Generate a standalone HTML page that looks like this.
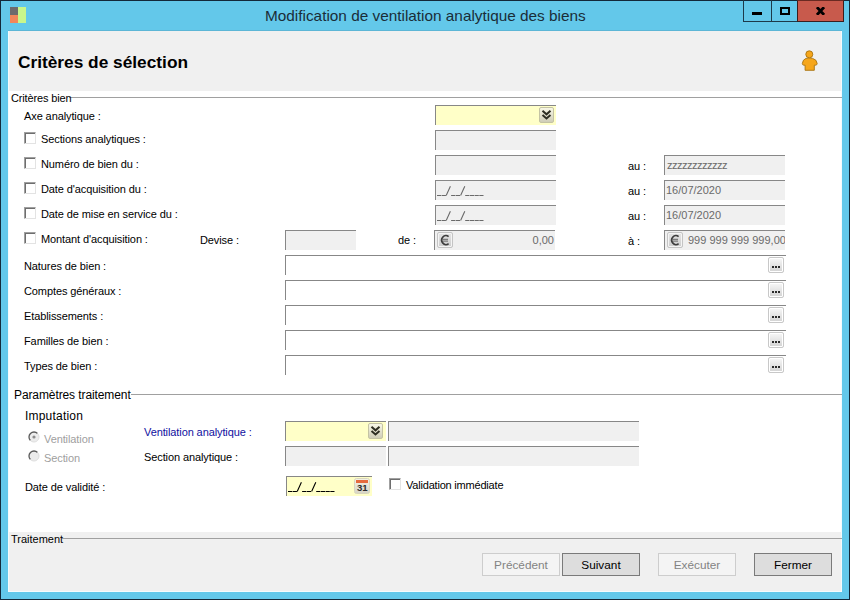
<!DOCTYPE html>
<html><head><meta charset="utf-8">
<style>
*{margin:0;padding:0;box-sizing:border-box}
html,body{width:850px;height:600px;overflow:hidden;background:#13293a;font-family:"Liberation Sans",sans-serif;font-size:11px;color:#000;position:relative}
.a{position:absolute}
#win{position:absolute;left:1px;top:1px;width:848px;height:598px;background:#63c8ea}
#client{position:absolute;left:8px;top:31px;width:834px;height:561px;background:#fff;border-left:1px solid #f4fbfd;border-bottom:1px solid #f4fbfd;border-right:1px solid #f4fbfd}
.t{position:absolute;white-space:nowrap;line-height:13px;letter-spacing:-0.1px}
.fld{position:absolute;background:#f0f0f0;border-top:1px solid #878787;border-left:1px solid #878787;height:20px;overflow:hidden}
.yel{background:#ffffc8}
.ft{position:absolute;white-space:nowrap;color:#6a6a6a;font-size:11px;line-height:13px;top:3px;left:1px}
.cb{position:absolute;width:12px;height:12px;border-top:1px solid #a0a0a0;border-left:1px solid #a0a0a0;border-right:1px solid #e3e3e3;border-bottom:1px solid #e3e3e3;box-shadow:inset 1px 1px #6e6e6e;background:#fff}
.ell{position:absolute;width:16px;height:16px;border:1px solid #c8c8c8;border-radius:2px;box-shadow:inset 0 0 0 1px #fff;background:linear-gradient(#f8f8f8,#d2d2d2)}
.ell:after{content:"";position:absolute;left:3px;top:8px;width:2px;height:2px;background:#2a2a2a;box-shadow:3px 0 #2a2a2a,6px 0 #2a2a2a}
.cbtn{position:absolute;width:15px;height:16px;border:1px solid #c4c3a4;border-radius:2px;background:linear-gradient(#f8f7e6,#cfcdb7)}
.eur{position:absolute;width:16px;height:16px;border:1px solid #c4c4c4;border-radius:2px;box-shadow:inset 0 0 0 1px #f4f4f4;background:linear-gradient(#e4e4e4,#cdcdcd)}
.btn{position:absolute;height:23px;width:78px;border:1px solid #7a7a7a;background:#dddddd;text-align:center;line-height:22px;font-size:11.8px;color:#000}
.dis{border-color:#cdcdcd;background:#f4f4f4;color:#838383}
.hl{position:absolute;height:1px;background:#a0a0a0}
</style></head><body>
<div id="win"></div>
<!-- title icon -->
<div class="a" style="left:10px;top:7px;width:8px;height:8px;background:#6e6a6c"></div>
<div class="a" style="left:10px;top:15px;width:8px;height:8px;background:#f2865a"></div>
<div class="a" style="left:18px;top:7px;width:8px;height:16px;background:#c9f68b"></div>
<div class="t" style="left:265px;top:7px;font-size:15.35px;line-height:18px;color:#1a2d38;letter-spacing:0">Modification de ventilation analytique des biens</div>
<!-- title buttons -->
<div class="a" style="left:743px;top:0;width:29px;height:22px;border:1px solid #1d3a4a;border-top:none"></div>
<div class="a" style="left:752px;top:12px;width:10px;height:3px;background:#000"></div>
<div class="a" style="left:771px;top:0;width:27px;height:22px;border:1px solid #1d3a4a;border-top:none;border-left:none"></div>
<div class="a" style="left:780px;top:7px;width:10px;height:8px;border:2px solid #000"></div>
<div class="a" style="left:797px;top:0;width:47px;height:22px;background:#c85a4c;border:1px solid #3a1e1e;border-top:1px solid #6a2a22"></div>
<svg class="a" style="left:816px;top:7px" width="9" height="8" viewBox="0 0 9 8"><path d="M0.9 0.2 L8.1 7.8 M8.1 0.2 L0.9 7.8" stroke="#000" stroke-width="2.9"/></svg>

<div class="a" style="left:8px;top:30px;width:834px;height:1px;background:#5cb6d6"></div>
<div id="client"></div>
<!-- header -->
<div class="a" style="left:9px;top:31px;width:832px;height:60px;background:#f0f0f0"></div>
<div class="t" style="left:18px;top:52px;font-size:17.3px;line-height:20px;font-weight:bold;letter-spacing:0">Critères de sélection</div>
<!-- person icon -->
<svg class="a" style="left:800px;top:48px" width="20" height="26" viewBox="0 0 20 26">
  <path d="M6 10.4 Q9.3 9.4 12.6 10.4 Q16.8 11.4 17.2 15.6 Q17.2 17 15.6 17.2 L14.3 17.2 L14.3 22.3 L5.1 22.3 L5.1 17.2 L3.8 17.2 Q2.3 17 2.3 15.6 Q2.8 11.4 6 10.4 Z" fill="#f6a61a" stroke="#a8730e" stroke-width="0.9"/>
  <circle cx="9.3" cy="6.3" r="3.5" fill="#f6a61a" stroke="#a8730e" stroke-width="0.9"/>
</svg>

<!-- group 1 -->
<div class="hl" style="left:69px;top:97px;width:773px"></div>
<div class="t" style="left:11px;top:92px;letter-spacing:-0.15px">Critères bien</div>

<div class="t" style="left:24px;top:110px">Axe analytique :</div>
<div class="fld yel" style="left:435px;top:105px;width:121px"></div>
<div class="cbtn" style="left:539px;top:107px"><svg width="13" height="14" viewBox="0 0 13 14" style="position:absolute;left:0;top:0"><path d="M2.5 2.8 L6.5 6.3 L10.5 2.8 M2.5 7 L6.5 10.5 L10.5 7" fill="none" stroke="#2e2e22" stroke-width="2"/></svg></div>

<div class="cb" style="left:24px;top:132px"></div>
<div class="t" style="left:41px;top:133px">Sections analytiques :</div>
<div class="fld" style="left:435px;top:130px;width:121px"></div>

<div class="cb" style="left:24px;top:157px"></div>
<div class="t" style="left:41px;top:158px">Numéro de bien du :</div>
<div class="fld" style="left:435px;top:155px;width:121px"></div>
<div class="t" style="left:628px;top:160px">au :</div>
<div class="fld" style="left:664px;top:155px;width:121px"><div class="ft" style="letter-spacing:-0.5px;left:2px">zzzzzzzzzzzz</div></div>

<div class="cb" style="left:24px;top:182px"></div>
<div class="t" style="left:41px;top:183px">Date d'acquisition du :</div>
<div class="fld" style="left:435px;top:180px;width:121px"><svg width="48" height="12" viewBox="0 0 48 12" style="position:absolute;left:1px;top:4px"><path d="M0.0 10.5 H4.2 M4.7 10.5 H8.9 M14.1 10.5 H18.3 M18.8 10.5 H23.0 M28.2 10.5 H32.4 M32.9 10.5 H37.1 M37.6 10.5 H41.8 M42.3 10.5 H46.5 M9.2 10.5 L13.4 1.2 M23.6 10.5 L27.8 1.2" fill="none" stroke="#6a6a6a" stroke-width="1.1"/></svg></div>
<div class="t" style="left:628px;top:185px">au :</div>
<div class="fld" style="left:664px;top:180px;width:121px"><div class="ft">16/07/2020</div></div>

<div class="cb" style="left:24px;top:207px"></div>
<div class="t" style="left:41px;top:208px">Date de mise en service du :</div>
<div class="fld" style="left:435px;top:205px;width:121px"><svg width="48" height="12" viewBox="0 0 48 12" style="position:absolute;left:1px;top:4px"><path d="M0.0 10.5 H4.2 M4.7 10.5 H8.9 M14.1 10.5 H18.3 M18.8 10.5 H23.0 M28.2 10.5 H32.4 M32.9 10.5 H37.1 M37.6 10.5 H41.8 M42.3 10.5 H46.5 M9.2 10.5 L13.4 1.2 M23.6 10.5 L27.8 1.2" fill="none" stroke="#6a6a6a" stroke-width="1.1"/></svg></div>
<div class="t" style="left:628px;top:210px">au :</div>
<div class="fld" style="left:664px;top:205px;width:121px"><div class="ft">16/07/2020</div></div>

<div class="cb" style="left:24px;top:232px"></div>
<div class="t" style="left:41px;top:233px">Montant d'acquisition :</div>
<div class="t" style="left:200px;top:234px">Devise :</div>
<div class="fld" style="left:285px;top:230px;width:71px"></div>
<div class="t" style="left:398px;top:234px">de :</div>
<div class="fld" style="left:434px;top:230px;width:121px"><div class="ft" style="left:auto;right:1px">0,00</div></div>
<div class="eur" style="left:437px;top:232px"><svg width="14" height="14" viewBox="0 0 14 14" style="position:absolute;left:0;top:0"><path d="M4.5 6.3 H10 M4.5 8.1 H10" stroke="#7c7c7c" stroke-width="1.3"/><path d="M10.6 3.6 A4.2 4.5 0 1 0 10.6 10.6" fill="none" stroke="#3e3e3e" stroke-width="1.7"/></svg></div>
<div class="t" style="left:628px;top:235px">à :</div>
<div class="fld" style="left:664px;top:230px;width:121px"><div class="ft" style="left:23px">999 999 999 999,00</div></div>
<div class="eur" style="left:667px;top:232px"><svg width="14" height="14" viewBox="0 0 14 14" style="position:absolute;left:0;top:0"><path d="M4.5 6.3 H10 M4.5 8.1 H10" stroke="#7c7c7c" stroke-width="1.3"/><path d="M10.6 3.6 A4.2 4.5 0 1 0 10.6 10.6" fill="none" stroke="#3e3e3e" stroke-width="1.7"/></svg></div>

<div class="t" style="left:24px;top:260px">Natures de bien :</div>
<div class="fld" style="left:285px;top:255px;width:501px;background:#fff"></div>
<div class="ell" style="left:768px;top:257px"></div>
<div class="t" style="left:24px;top:285px">Comptes généraux :</div>
<div class="fld" style="left:285px;top:280px;width:501px;background:#fff"></div>
<div class="ell" style="left:768px;top:282px"></div>
<div class="t" style="left:24px;top:310px">Etablissements :</div>
<div class="fld" style="left:285px;top:305px;width:501px;background:#fff"></div>
<div class="ell" style="left:768px;top:307px"></div>
<div class="t" style="left:24px;top:335px">Familles de bien :</div>
<div class="fld" style="left:285px;top:330px;width:501px;background:#fff"></div>
<div class="ell" style="left:768px;top:332px"></div>
<div class="t" style="left:24px;top:360px">Types de bien :</div>
<div class="fld" style="left:285px;top:355px;width:501px;background:#fff"></div>
<div class="ell" style="left:768px;top:357px"></div>

<!-- group 2 -->
<div class="hl" style="left:131px;top:394px;width:711px"></div>
<div class="t" style="left:14px;top:388px;font-size:12px;line-height:14px;letter-spacing:-0.1px">Paramètres traitement</div>
<div class="t" style="left:25px;top:409px;font-size:12px;line-height:14px;letter-spacing:0.2px">Imputation</div>

<svg class="a" style="left:28px;top:431px" width="12" height="12" viewBox="0 0 12 12"><circle cx="6" cy="6" r="5" fill="#ececec"/><path d="M2.46 9.54 A5 5 0 0 1 9.54 2.46" fill="none" stroke="#5a5a5a" stroke-width="1.3"/><path d="M9.54 2.46 A5 5 0 0 1 2.46 9.54" fill="none" stroke="#dedede" stroke-width="1"/><circle cx="6" cy="6" r="1.6" fill="#8c8c8c"/></svg>
<div class="t" style="left:44px;top:433px;color:#a0a0a0">Ventilation</div>
<svg class="a" style="left:28px;top:450px" width="12" height="12" viewBox="0 0 12 12"><circle cx="6" cy="6" r="5" fill="#ececec"/><path d="M2.46 9.54 A5 5 0 0 1 9.54 2.46" fill="none" stroke="#5a5a5a" stroke-width="1.3"/><path d="M9.54 2.46 A5 5 0 0 1 2.46 9.54" fill="none" stroke="#dedede" stroke-width="1"/></svg>
<div class="t" style="left:44px;top:452px;color:#a0a0a0">Section</div>

<div class="t" style="left:144px;top:426px;color:#1010a0">Ventilation analytique :</div>
<div class="fld yel" style="left:285px;top:421px;width:101px"></div>
<div class="cbtn" style="left:368px;top:423px"><svg width="13" height="14" viewBox="0 0 13 14" style="position:absolute;left:0;top:0"><path d="M2.5 2.8 L6.5 6.3 L10.5 2.8 M2.5 7 L6.5 10.5 L10.5 7" fill="none" stroke="#2e2e22" stroke-width="2"/></svg></div>
<div class="fld" style="left:388px;top:421px;width:251px"></div>

<div class="t" style="left:144px;top:451px">Section analytique :</div>
<div class="fld" style="left:285px;top:446px;width:101px"></div>
<div class="fld" style="left:388px;top:446px;width:251px"></div>

<div class="t" style="left:25px;top:481px">Date de validité :</div>
<div class="fld yel" style="left:286px;top:476px;width:86px"><svg width="48" height="12" viewBox="0 0 48 12" style="position:absolute;left:1px;top:4px"><path d="M0.0 10.5 H4.2 M4.7 10.5 H8.9 M14.1 10.5 H18.3 M18.8 10.5 H23.0 M28.2 10.5 H32.4 M32.9 10.5 H37.1 M37.6 10.5 H41.8 M42.3 10.5 H46.5 M9.2 10.5 L13.4 1.2 M23.6 10.5 L27.8 1.2" fill="none" stroke="#000" stroke-width="1.1"/></svg></div>
<svg class="a" style="left:354px;top:478px" width="16" height="16" viewBox="0 0 16 16">
  <defs><linearGradient id="cg" x1="0" y1="0" x2="0" y2="1"><stop offset="0" stop-color="#f4f2e6"/><stop offset="1" stop-color="#d6d4c6"/></linearGradient></defs>
  <rect x="0.5" y="0.5" width="15" height="15" rx="2" fill="url(#cg)" stroke="#d9d6bc"/>
  <rect x="2" y="2" width="12" height="3" fill="#e56a3e"/>
  <text x="8.3" y="13" font-family="Liberation Sans" font-size="9.6" font-weight="bold" text-anchor="middle" fill="#2c2c2c">31</text>
</svg>
<div class="cb" style="left:389px;top:478px"></div>
<div class="t" style="left:406px;top:479px;letter-spacing:-0.2px">Validation immédiate</div>

<!-- footer -->
<div class="a" style="left:9px;top:532px;width:832px;height:59px;background:#f0f0f0"></div>
<div class="hl" style="left:62px;top:538px;width:780px"></div>
<div class="t" style="left:11px;top:533px;letter-spacing:0">Traitement</div>

<div class="btn dis" style="left:482px;top:553px">Précédent</div>
<div class="btn" style="left:562px;top:553px">Suivant</div>
<div class="btn dis" style="left:658px;top:553px">Exécuter</div>
<div class="btn" style="left:754px;top:553px">Fermer</div>
</body></html>
